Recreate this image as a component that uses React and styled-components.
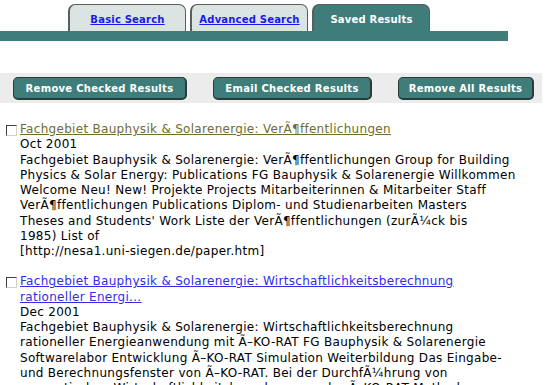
import React from "react";
import styled, { createGlobalStyle } from "styled-components";

const GlobalStyle = createGlobalStyle`
  body {
    margin: 0;
    background: #ffffff;
    font-family: "DejaVu Sans", Verdana, sans-serif;
  }
`;

// lines kept as they wrap in the saved-results page
const results = [
  {
    title: ["Fachgebiet Bauphysik & Solarenergie: VerÃ¶ffentlichungen"],
    visited: true,
    date: "Oct 2001",
    lines: [
      "Fachgebiet Bauphysik & Solarenergie: VerÃ¶ffentlichungen Group for Building",
      "Physics & Solar Energy: Publications FG Bauphysik & Solarenergie Willkommen",
      "Welcome Neu! New! Projekte Projects Mitarbeiterinnen & Mitarbeiter Staff",
      "VerÃ¶ffentlichungen Publications Diplom- und Studienarbeiten Masters",
      "Theses and Students' Work Liste der VerÃ¶ffentlichungen (zurÃ¼ck bis",
      "1985) List of",
      "[http://nesa1.uni-siegen.de/paper.htm]",
    ],
  },
  {
    title: [
      "Fachgebiet Bauphysik & Solarenergie: Wirtschaftlichkeitsberechnung",
      "rationeller Energi...",
    ],
    visited: false,
    date: "Dec 2001",
    lines: [
      "Fachgebiet Bauphysik & Solarenergie: Wirtschaftlichkeitsberechnung",
      "rationeller Energieanwendung mit Ã–KO-RAT FG Bauphysik & Solarenergie",
      "Softwarelabor Entwicklung Ã–KO-RAT Simulation Weiterbildung Das Eingabe-",
      "und Berechnungsfenster von Ã–KO-RAT. Bei der DurchfÃ¼hrung von",
      "energetischen Wirtschaftlichkeitsberechnungen der Ã–KO-RAT Methode",
    ],
  },
];

function App() {
  return (
    <>
      <GlobalStyle />
      <Page>
        <TabRow>
          <Tab>
            <TabLink href="#">Basic Search</TabLink>
          </Tab>
          <Tab>
            <TabLink href="#">Advanced Search</TabLink>
          </Tab>
          <Tab active>Saved Results</Tab>
        </TabRow>
        <TabBar />

        <ButtonStrip>
          <ActionButton width={174}>Remove Checked Results</ActionButton>
          <ActionButton width={159}>Email Checked Results</ActionButton>
          <ActionButton width={136}>Remove All Results</ActionButton>
        </ButtonStrip>

        <ResultList>
          {results.map((r, i) => (
            <Result key={i}>
              <CheckBox />
              <ResultBody>
                <ResultTitle href="#" $visited={r.visited}>
                  {r.title.map((t, j) => (
                    <Line key={j}>{t}</Line>
                  ))}
                </ResultTitle>
                <Line>{r.date}</Line>
                {r.lines.map((l, j) => (
                  <Line key={j}>{l}</Line>
                ))}
              </ResultBody>
            </Result>
          ))}
        </ResultList>
      </Page>
    </>
  );
}

const Page = styled.div`
  width: 550px;
  height: 385px;
  overflow: hidden;
  padding-top: 4px;
  box-sizing: border-box;
`;

const TabRow = styled.div`
  display: flex;
  gap: 4px;
  margin-left: 68px;
  height: 27px;
`;

const Tab = styled.div`
  width: 118px;
  box-sizing: border-box;
  display: flex;
  align-items: center;
  justify-content: center;
  padding-top: 2px;
  border: 1px solid #5c5c5c;
  border-bottom: none;
  border-left-width: 2px;
  border-radius: 7px 7px 0 0;
  background: ${(p) => (p.active ? "#3f7d7b" : "#dbe3e3")};
  color: #ffffff;
  font-size: 10px;
  font-weight: bold;
  letter-spacing: 0.2px;
`;

const TabLink = styled.a`
  color: #1818f0;
  text-decoration: underline;
`;

const TabBar = styled.div`
  width: 508px;
  height: 10px;
  background: #3f7d7b;
`;

const ButtonStrip = styled.div`
  margin-top: 32px;
  width: 542px;
  height: 30px;
  box-sizing: border-box;
  padding: 4px 0 0 13px;
  display: flex;
  align-items: flex-start;
  gap: 26px;
  background: #ececec;
`;

const ActionButton = styled.button`
  width: ${(p) => p.width}px;
  height: 23px;
  box-sizing: border-box;
  border: 1px solid #2b3b3a;
  border-right-width: 2px;
  border-bottom-width: 2px;
  border-radius: 5px;
  background: #3f7d7b;
  color: #ffffff;
  font-family: "DejaVu Sans", Verdana, sans-serif;
  font-size: 10px;
  font-weight: bold;
  letter-spacing: 0.3px;
  padding: 0;
`;

const ResultList = styled.div`
  margin-top: 19px;
  display: flex;
  flex-direction: column;
  gap: 15px;
  font-size: 12px;
  line-height: 15.25px;
  letter-spacing: 0.3px;
  color: #000000;
`;

const Result = styled.div`
  display: flex;
  align-items: flex-start;
`;

const CheckBox = styled.span`
  flex: none;
  width: 11px;
  height: 11px;
  box-sizing: border-box;
  margin: 3px 3px 0 6px;
  border-top: 1px solid #404040;
  border-left: 1px solid #404040;
  border-right: 1px solid #d0d0d0;
  border-bottom: 1px solid #d0d0d0;
  background: #ffffff;
`;

const ResultBody = styled.div`
  width: 526px;
`;

const Line = styled.div`
  white-space: nowrap;
`;

const ResultTitle = styled.a`
  display: block;
  width: max-content;
  color: ${(p) => (p.$visited ? "#6d6d2e" : "#2e2ee8")};
  text-decoration: underline;
`;

export default App;
